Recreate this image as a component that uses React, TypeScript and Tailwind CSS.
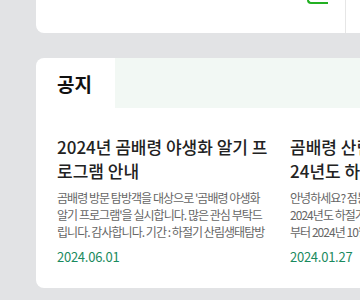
import React from 'react';

const notices = [
  {
    title: '2024년 곰배령 야생화 알기 프로그램 안내',
    body: "곰배령 방문 탐방객을 대상으로 '곰배령 야생화 알기 프로그램'을 실시합니다. 많은 관심 부탁드립니다. 감사합니다. 기간 : 하절기 산림생태탐방 기간 중",
    date: '2024.06.01',
  },
  {
    title: '곰배령 산림생태탐방 안내 20\n24년도 하절기 예약 안내',
    body: '안녕하세요? 점봉산 곰배령입니다.\n2024년도 하절기 산림생태탐방을 5월\n부터 2024년 10월 31일까지 운영합니다.',
    date: '2024.01.27',
  },
];

export default function App() {
  return (
    <div
      className="w-[360px] h-[300px] overflow-hidden bg-[#e2e3e5] pl-[36px]"
      style={{ fontFamily: '"Noto Sans CJK KR", "Noto Sans", sans-serif' }}
    >
      {/* top card (cut off) */}
      <div className="w-[560px] h-[33px] bg-white rounded-bl-[8px] flex">
        <div className="w-[271px] shrink-0" />
        <div className="w-[21px] h-[20px] -mt-[16px] border-l-2 border-b-2 border-[#22b022] rounded-bl-[4px] shrink-0" />
        <div className="w-[17px] shrink-0" />
        <div className="w-px h-full bg-[#e6e6e6] shrink-0" />
      </div>

      {/* notice card */}
      <div className="mt-[25px] w-[560px] h-[230px] bg-white rounded-l-[8px] overflow-hidden">
        <div className="flex h-[50px]">
          <div className="w-[79px] shrink-0 flex items-center pl-[21px]">
            <h2 className="text-[19px] font-bold text-[#111] leading-none">공지</h2>
          </div>
          <div className="flex-1 bg-[#f2f8f4]" />
        </div>

        <div className="flex gap-[20px] pl-[21px] pt-[27px]">
          {notices.map((n) => (
            <div key={n.date} className="w-[213px] shrink-0">
              <p className="h-[48px] overflow-hidden whitespace-pre-line text-[17px] leading-[24px] font-medium text-[#222]">
                {n.title}
              </p>
              <p className="mt-[6px] h-[51px] overflow-hidden whitespace-pre-line text-[12px] leading-[17px] tracking-[-0.08em] text-[#666]">
                {n.body}
              </p>
              <p className="mt-[7px] text-[13px] leading-[20px] tracking-[-0.02em] text-[#1a8a5e]">
                {n.date}
              </p>
            </div>
          ))}
        </div>
      </div>
    </div>
  );
}
